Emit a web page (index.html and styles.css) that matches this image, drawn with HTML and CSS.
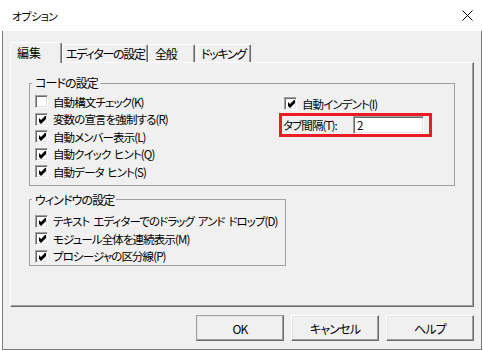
FILE: index.html
```html
<!DOCTYPE html>
<html lang="ja">
<head>
    <meta charset="UTF-8">
    <meta name="viewport" content="width=device-width, initial-scale=1.0">
    <title>オプション</title>
    <link rel="stylesheet" href="styles.css">
</head>
<body>
    <div class="titlebar">
        <span class="title">オプション</span>
        <svg class="close" width="11" height="11" viewBox="0 0 11 11">
            <path d="M0.5 0.5 L10.5 10.5 M10.5 0.5 L0.5 10.5" stroke="#000" stroke-width="1" fill="none"/>
        </svg>
    </div>

    <div class="dialog">
        <div class="tabs">
            <div class="tab active tab-edit">編集</div>
            <div class="tab tab-editor">エディターの設定</div>
            <div class="tab tab-general">全般</div>
            <div class="tab tab-docking">ドッキング</div>
        </div>

        <div class="panel">
            <fieldset class="group group-code">
                <legend>コードの設定</legend>
                <div class="code-grid">
                    <div class="col">
                        <label class="row"><span class="box"></span>自動構文チェック(K)</label>
                        <label class="row"><span class="box on"><svg viewBox="0 0 11 11"><path d="M1 3 L3 5 L7 1 L8 1 L8 4 L3 9 L1 7 Z"/></svg></span>変数の宣言を強制する(R)</label>
                        <label class="row"><span class="box on"><svg viewBox="0 0 11 11"><path d="M1 3 L3 5 L7 1 L8 1 L8 4 L3 9 L1 7 Z"/></svg></span>自動メンバー表示(L)</label>
                        <label class="row"><span class="box on"><svg viewBox="0 0 11 11"><path d="M1 3 L3 5 L7 1 L8 1 L8 4 L3 9 L1 7 Z"/></svg></span>自動クイック ヒント(Q)</label>
                        <label class="row"><span class="box on"><svg viewBox="0 0 11 11"><path d="M1 3 L3 5 L7 1 L8 1 L8 4 L3 9 L1 7 Z"/></svg></span>自動データ ヒント(S)</label>
                    </div>
                    <div class="col col-right">
                        <label class="row indent"><span class="box on"><svg viewBox="0 0 11 11"><path d="M1 3 L3 5 L7 1 L8 1 L8 4 L3 9 L1 7 Z"/></svg></span>自動インデント(I)</label>
                        <div class="highlight">
                            <label for="tabsize">タブ間隔(T):</label>
                            <input type="text" id="tabsize" class="field" value="2">
                        </div>
                    </div>
                </div>
            </fieldset>

            <fieldset class="group group-window">
                <legend>ウィンドウの設定</legend>
                <label class="row"><span class="box on"><svg viewBox="0 0 11 11"><path d="M1 3 L3 5 L7 1 L8 1 L8 4 L3 9 L1 7 Z"/></svg></span>テキスト エディターでのドラッグ アンド ドロップ(D)</label>
                <label class="row"><span class="box on"><svg viewBox="0 0 11 11"><path d="M1 3 L3 5 L7 1 L8 1 L8 4 L3 9 L1 7 Z"/></svg></span>モジュール全体を連続表示(M)</label>
                <label class="row"><span class="box on"><svg viewBox="0 0 11 11"><path d="M1 3 L3 5 L7 1 L8 1 L8 4 L3 9 L1 7 Z"/></svg></span>プロシージャの区分線(P)</label>
            </fieldset>
        </div>

        <div class="actions">
            <button class="btn btn-default">OK</button>
            <button class="btn">キャンセル</button>
            <button class="btn">ヘルプ</button>
        </div>
    </div>
</body>
</html>
```

FILE: styles.css
```css
* {
    box-sizing: border-box;
}
body {
    margin: 0;
    background-color: #fff;
    font-family: "Noto Sans CJK JP", sans-serif;
    font-size: 11.5px;
    font-feature-settings: "palt";
    letter-spacing: -0.9px;
    word-spacing: 2px;
    color: #000;
}
.titlebar {
    height: 31px;
    display: flex;
    align-items: center;
    justify-content: space-between;
    padding: 0 10px 0 12px;
    background-color: #fff;
}
.title {
    font-size: 11px;
    letter-spacing: -0.6px;
}
.close {
    display: block;
}
.dialog {
    height: 319px;
    margin: 0 1px 0 2px;
    padding: 11px 7px 0;
    border: 1px solid #7a7a7a;
    border-top: none;
    background-color: #f0f0f0;
}
.tabs {
    display: flex;
    align-items: flex-end;
    height: 20px;
}
.tab {
    flex: none;
    height: 18px;
    line-height: 17px;
    padding: 0 0 0 3px;
    border: 1px solid;
    border-color: #fff #696969 transparent #fff;
    border-bottom: none;
    border-radius: 2px 2px 0 0;
    box-shadow: inset -1px 0 #a0a0a0;
    font-size: 12px;
    letter-spacing: -1.3px;
    white-space: nowrap;
}
.tab.active {
    position: relative;
    z-index: 1;
    height: 21px;
    margin-bottom: -1px;
    padding-left: 6px;
    line-height: 19px;
    letter-spacing: 0;
    background-color: #f0f0f0;
}
.tab-edit {
    width: 52px;
}
.tab-editor {
    width: 86px;
}
.tab-general {
    width: 47px;
    padding-left: 6px;
}
.tab-docking {
    width: 54px;
    margin-left: 2px;
}
.panel {
    height: 245px;
    padding: 13px 0 0 18px;
    border: 1px solid;
    border-color: #fff #696969 #696969 #fff;
    box-shadow: inset -1px -1px #a0a0a0;
}
.group {
    margin: 0;
    padding: 3px 0 4px 5px;
    border: 1px solid #a0a0a0;
    min-inline-size: 0;
}
.group legend {
    margin-left: -3px;
    padding: 0 2px 0 3px;
    line-height: 14px;
    font-size: 12px;
}
.group-code {
    width: 426px;
}
.group-window {
    width: 257px;
    margin-top: 7px;
    padding-top: 6px;
    padding-bottom: 0;
}
.code-grid {
    display: grid;
    grid-template-columns: 244px auto;
}
.col-right {
    padding-top: 2px;
}
.row {
    display: flex;
    align-items: center;
    gap: 5px;
    height: 17.5px;
    white-space: nowrap;
}
.row.indent {
    margin-left: 5px;
}
.box {
    flex: none;
    width: 13px;
    height: 13px;
    padding: 1px;
    background-color: #fff;
    border: 1px solid;
    border-color: #a0a0a0 #fff #fff #a0a0a0;
    box-shadow: inset 1px 1px #696969, inset -1px -1px #e3e3e3;
}
.box svg {
    display: block;
    width: 11px;
    height: 11px;
    fill: #000;
    transform: translate(1px, 0);
}
.highlight {
    display: flex;
    align-items: center;
    justify-content: space-between;
    width: 153px;
    height: 24px;
    padding: 0 5px 0 1px;
    border: 3px solid #ed1c24;
}
.field {
    width: 71px;
    height: 18px;
    padding: 0 3px;
    font: inherit;
    letter-spacing: inherit;
    border: 1px solid;
    border-color: #a0a0a0 #fff #fff #a0a0a0;
    box-shadow: inset 1px 1px #696969, inset -1px -1px #e3e3e3;
    background-color: #fff;
    outline: none;
}
.actions {
    display: flex;
    justify-content: flex-end;
    gap: 7px;
    margin-top: 8px;
}
.btn {
    width: 88px;
    height: 26px;
    padding: 0;
    font: inherit;
    font-size: 12px;
    letter-spacing: -0.8px;
    color: #000;
    background-color: #f0f0f0;
    border: 1px solid;
    border-color: #fff #696969 #696969 #fff;
    box-shadow: inset -1px -1px #a0a0a0, inset 1px 1px #e3e3e3;
}
.btn-default {
    border-color: #a0a0a0 #696969 #696969 #a0a0a0;
}
```
